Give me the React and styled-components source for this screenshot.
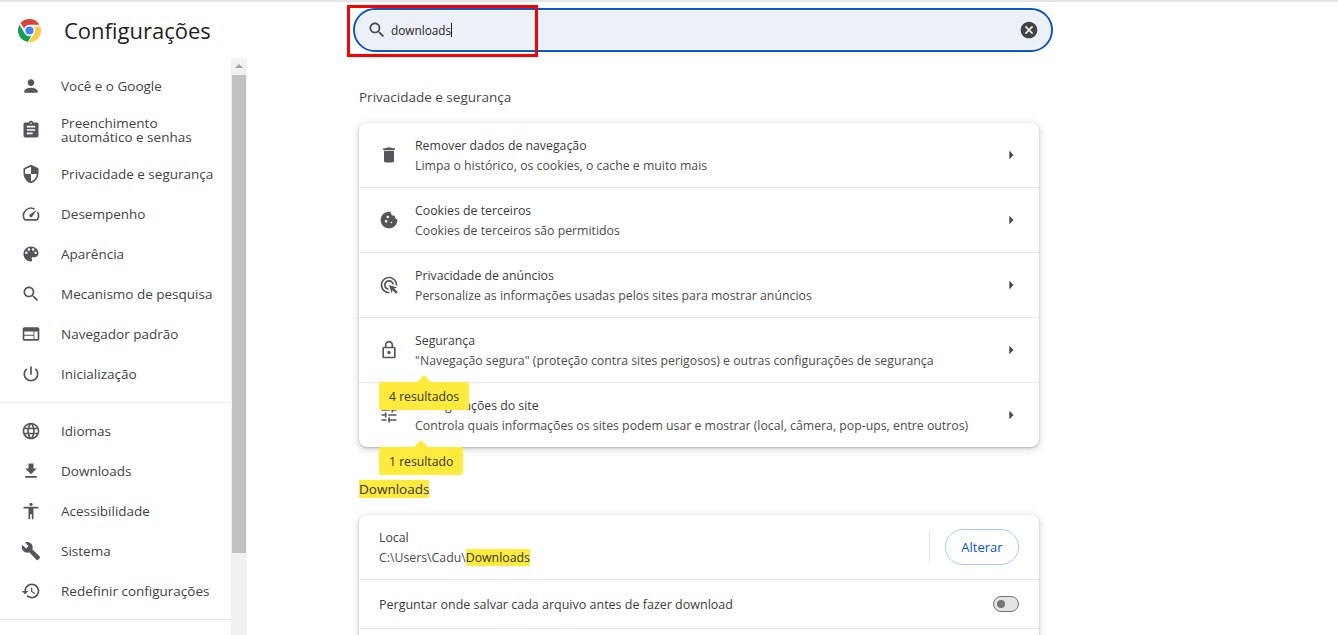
import React from 'react'
import styled, {createGlobalStyle} from 'styled-components'

const icons = {
  person: 'M12 12c2.21 0 4-1.79 4-4s-1.79-4-4-4-4 1.79-4 4 1.79 4 4 4zm0 2c-2.67 0-8 1.34-8 4v2h16v-2c0-2.66-5.33-4-8-4z',
  assignment: 'M19 3h-4.18C14.4 1.84 13.3 1 12 1c-1.3 0-2.4.84-2.82 2H5c-1.1 0-2 .9-2 2v14c0 1.1.9 2 2 2h14c1.1 0 2-.9 2-2V5c0-1.1-.9-2-2-2zm-7 0c.55 0 1 .45 1 1s-.45 1-1 1-1-.45-1-1 .45-1 1-1zm2 14H7v-2h7v2zm3-4H7v-2h10v2zm0-4H7V7h10v2z',
  shield: 'M12 1L3 5v6c0 5.55 3.84 10.74 9 12 5.16-1.26 9-6.45 9-12V5l-9-4zm0 10.99h7c-.53 4.12-3.28 7.79-7 8.94V12H5V6.3l7-3.11v8.8z',
  speed: 'M20.38 8.57l-1.23 1.85a8 8 0 0 1-.22 7.58H5.07A8 8 0 0 1 15.58 6.85l1.85-1.23A10 10 0 0 0 3.35 19a2 2 0 0 0 1.72 1h13.85a2 2 0 0 0 1.74-1 10 10 0 0 0-.27-10.44zm-9.79 6.84a2 2 0 0 0 2.83 0l5.66-8.49-8.49 5.66a2 2 0 0 0 0 2.83z',
  palette: 'M12 3c-4.97 0-9 4.03-9 9s4.03 9 9 9c.83 0 1.5-.67 1.5-1.5 0-.39-.15-.74-.39-1.01-.23-.26-.38-.61-.38-.99 0-.83.67-1.5 1.5-1.5H16c2.76 0 5-2.24 5-5 0-4.42-4.03-8-9-8zm-5.5 9c-.83 0-1.5-.67-1.5-1.5S5.67 9 6.5 9 8 9.67 8 10.5 7.33 12 6.5 12zm3-4C8.67 8 8 7.33 8 6.5S8.67 5 9.5 5s1.5.67 1.5 1.5S10.33 8 9.5 8zm5 0c-.83 0-1.5-.67-1.5-1.5S13.67 5 14.5 5s1.5.67 1.5 1.5S15.33 8 14.5 8zm3 4c-.83 0-1.5-.67-1.5-1.5S16.67 9 17.5 9s1.5.67 1.5 1.5-.67 1.5-1.5 1.5z',
  search: 'M15.5 14h-.79l-.28-.27C15.41 12.59 16 11.11 16 9.5 16 5.91 13.09 3 9.5 3S3 5.91 3 9.5 5.91 16 9.5 16c1.61 0 3.09-.59 4.23-1.57l.27.28v.79l5 4.99L20.49 19l-4.99-5zm-6 0C7.01 14 5 11.99 5 9.5S7.01 5 9.5 5 14 7.01 14 9.5 11.99 14 9.5 14z',
  web: 'M20 4H4c-1.1 0-1.99.9-1.99 2L2 18c0 1.1.9 2 2 2h16c1.1 0 2-.9 2-2V6c0-1.1-.9-2-2-2zm-5 14H4v-4h11v4zm0-5H4V9h11v4zm5 5h-4V9h4v9z',
  power: 'M13 3h-2v10h2V3zm4.83 2.17l-1.42 1.42C17.99 7.86 19 9.81 19 12c0 3.87-3.13 7-7 7s-7-3.13-7-7c0-2.19 1.01-4.14 2.58-5.42L6.17 5.17C4.23 6.82 3 9.26 3 12c0 4.97 4.03 9 9 9s9-4.03 9-9c0-2.74-1.23-5.18-3.17-6.83z',
  language: 'M11.99 2C6.47 2 2 6.48 2 12s4.47 10 9.99 10C17.52 22 22 17.52 22 12S17.52 2 11.99 2zm6.93 6h-2.95c-.32-1.25-.78-2.45-1.38-3.56 1.84.63 3.37 1.91 4.33 3.56zM12 4.04c.83 1.2 1.48 2.53 1.91 3.96h-3.82c.43-1.43 1.08-2.76 1.91-3.96zM4.26 14C4.1 13.36 4 12.69 4 12s.1-1.36.26-2h3.38c-.08.66-.14 1.32-.14 2 0 .68.06 1.34.14 2H4.26zm.82 2h2.95c.32 1.25.78 2.45 1.38 3.56-1.84-.63-3.37-1.9-4.33-3.56zm2.95-8H5.08c.96-1.66 2.49-2.93 4.33-3.56C8.81 5.55 8.35 6.75 8.03 8zM12 19.96c-.83-1.2-1.48-2.53-1.91-3.96h3.82c-.43 1.43-1.08 2.76-1.91 3.96zM14.34 14H9.66c-.09-.66-.16-1.32-.16-2 0-.68.07-1.35.16-2h4.68c.09.65.16 1.32.16 2 0 .68-.07 1.34-.16 2zm.25 5.56c.6-1.11 1.06-2.31 1.38-3.56h2.95c-.96 1.65-2.49 2.93-4.33 3.56zM16.36 14c.08-.66.14-1.32.14-2 0-.68-.06-1.34-.14-2h3.38c.16.64.26 1.31.26 2s-.1 1.36-.26 2h-3.38z',
  download: 'M19 9h-4V3H9v6H5l7 7 7-7zM5 18v2h14v-2H5z',
  accessibility: 'M12 2c1.1 0 2 .9 2 2s-.9 2-2 2-2-.9-2-2 .9-2 2-2zm9 7h-6v13h-2v-6h-2v6H9V9H3V7h18v2z',
  build: 'M22.7 19l-9.1-9.1c.9-2.3.4-5-1.5-6.9-2-2-5-2.4-7.4-1.3L9 6 6 9 1.6 4.7C.4 7.1.9 10.1 2.9 12.1c1.9 1.9 4.6 2.4 6.9 1.5l9.1 9.1c.4.4 1 .4 1.4 0l2.3-2.3c.5-.4.5-1.1.1-1.4z',
  restore: 'M13 3c-4.97 0-9 4.03-9 9H1l3.89 3.89.07.14L9 12H6c0-3.87 3.13-7 7-7s7 3.13 7 7-3.13 7-7 7c-1.93 0-3.68-.79-4.94-2.06l-1.42 1.42C8.27 19.99 10.51 21 13 21c4.97 0 9-4.03 9-9s-4.03-9-9-9zm-1 5v5l4.28 2.54.72-1.21-3.5-2.08V8H12z',
  trash: 'M6 19c0 1.1.9 2 2 2h8c1.1 0 2-.9 2-2V7H6v12zM19 4h-3.5l-1-1h-5l-1 1H5v2h14V4z',
  cookie: 'M21.95 10.99c-1.79-.03-3.7-1.95-2.68-4.22-2.97 1-5.78-1.59-5.19-4.56C7.11.74 2 6.41 2 12c0 5.52 4.48 10 10 10 5.89 0 10.54-5.08 9.95-11.01zM8.5 15c-.83 0-1.5-.67-1.5-1.5S7.67 12 8.5 12s1.5.67 1.5 1.5S9.33 15 8.5 15zm2-5C9.67 10 9 9.33 9 8.5S9.67 7 10.5 7s1.5.67 1.5 1.5-.67 1.5-1.5 1.5zm4.5 6c-.55 0-1-.45-1-1s.45-1 1-1 1 .45 1 1-.45 1-1 1z',
  ads: 'M11.71 17.99C8.53 17.84 6 15.22 6 12c0-3.31 2.69-6 6-6 3.22 0 5.84 2.53 5.99 5.71l-2.1-.63C15.48 9.31 13.89 8 12 8c-2.21 0-4 1.79-4 4 0 1.89 1.31 3.48 3.08 3.89l.63 2.1zM22 12c0 .3-.01.6-.04.9l-1.97-.59c.01-.1.01-.21.01-.31 0-4.42-3.58-8-8-8s-8 3.58-8 8 3.58 8 8 8c.1 0 .21 0 .31-.01l.59 1.97c-.3.03-.6.04-.9.04-5.52 0-10-4.48-10-10S6.48 2 12 2s10 4.48 10 10zm-3.77 4.26L22 15l-10-3 3 10 1.26-3.77 4.27 4.27 1.98-1.98-4.28-4.26z',
  lock: 'M18 8h-1V6c0-2.76-2.24-5-5-5S7 3.24 7 6v2H6c-1.1 0-2 .9-2 2v10c0 1.1.9 2 2 2h12c1.1 0 2-.9 2-2V10c0-1.1-.9-2-2-2zM9 6c0-1.66 1.34-3 3-3s3 1.34 3 3v2H9V6zm9 14H6V10h12v10zm-6-3c1.1 0 2-.9 2-2s-.9-2-2-2-2 .9-2 2 .9 2 2 2z',
  tune: 'M3 17v2h6v-2H3zM3 5v2h10V5H3zm10 16v-2h8v-2h-8v-2h-2v6h2zM7 9v2H3v2h4v2h2V9H7zm14 4v-2H11v2h10zm-6-4h2V7h4V5h-4V3h-2v6z',
  arrow: 'M10 17l5-5-5-5v10z',
  cancel: 'M12 2C6.47 2 2 6.47 2 12s4.47 10 10 10 10-4.47 10-10S17.53 2 12 2zm5 13.59L15.59 17 12 13.41 8.41 17 7 15.59 10.59 12 7 8.41 8.41 7 12 10.59 15.59 7 17 8.41 13.41 12 17 15.59z',
}

const Icon = ({name, size = 20}) => (
  <svg width={size} height={size} viewBox="0 0 24 24" fill="currentColor"><path d={icons[name]} /></svg>
)

const ChromeLogo = () => (
  <svg width="23" height="23" viewBox="0 0 48 48">
    <path fill="#db4437" d="M24 0a24 24 0 0 1 20.8 12H24a12 12 0 0 0-11.2 7.6L5.2 8.6A24 24 0 0 1 24 0z" />
    <path fill="#0f9d58" d="M3.2 12 L14 30.4A12 12 0 0 0 27.6 35.5L20.6 47.8A24 24 0 0 1 3.2 12z" />
    <path fill="#ffcd40" d="M44.8 12A24 24 0 0 1 22.6 48L33.6 30.8A12 12 0 0 0 33 16H44.8z" />
    <circle cx="24" cy="24" r="11" fill="#fff" />
    <circle cx="24" cy="24" r="8.6" fill="#4285f4" />
  </svg>
)

const navTop = [
  ['person', 'Você e o Google'],
  ['assignment', 'Preenchimento\nautomático e senhas'],
  ['shield', 'Privacidade e segurança'],
  ['speed', 'Desempenho'],
  ['palette', 'Aparência'],
  ['search', 'Mecanismo de pesquisa'],
  ['web', 'Navegador padrão'],
  ['power', 'Inicialização'],
]

const navBottom = [
  ['language', 'Idiomas'],
  ['download', 'Downloads'],
  ['accessibility', 'Acessibilidade'],
  ['build', 'Sistema'],
  ['restore', 'Redefinir configurações'],
]

const privacyRows = [
  ['trash', 'Remover dados de navegação', 'Limpa o histórico, os cookies, o cache e muito mais'],
  ['cookie', 'Cookies de terceiros', 'Cookies de terceiros são permitidos'],
  ['ads', 'Privacidade de anúncios', 'Personalize as informações usadas pelos sites para mostrar anúncios'],
  ['lock', 'Segurança', '"Navegação segura" (proteção contra sites perigosos) e outras configurações de segurança'],
  ['tune', 'Configurações do site', 'Controla quais informações os sites podem usar e mostrar (local, câmera, pop-ups, entre outros)'],
]

const App = () => (
  <>
    <GlobalStyle />
    <Page>
      <Sidebar>
        <Brand>
          <ChromeLogo />
          <BrandTitle>Configurações</BrandTitle>
        </Brand>
        <NavArea>
          <Nav>
            <NavGroup>
              {navTop.map(([icon, label]) => (
                <NavItem key={label} $tall={label.includes('\n')}>
                  <Icon name={icon} />
                  <NavLabel>{label}</NavLabel>
                </NavItem>
              ))}
            </NavGroup>
            <NavGroup>
              {navBottom.map(([icon, label]) => (
                <NavItem key={label}>
                  <Icon name={icon} />
                  <NavLabel>{label}</NavLabel>
                </NavItem>
              ))}
            </NavGroup>
          </Nav>
          <ScrollTrack>
            <ScrollArrow />
            <ScrollThumb />
            <ScrollArrow $down />
          </ScrollTrack>
        </NavArea>
      </Sidebar>
      <Main>
        <SearchBox>
          <Icon name="search" />
          <SearchText>downloads<Caret /></SearchText>
          <ClearButton><Icon name="cancel" /></ClearButton>
          <RedFrame />
        </SearchBox>
        <SectionTitle>Privacidade e segurança</SectionTitle>
        <Card>
          {privacyRows.map(([icon, title, text]) => (
            <LinkRow key={title}>
              <RowIcon><Icon name={icon} /></RowIcon>
              <RowText>
                <RowTitle>{title}</RowTitle>
                <RowSub>{text}</RowSub>
              </RowText>
              <RowArrow><Icon name="arrow" /></RowArrow>
            </LinkRow>
          ))}
          <Bubble $top={259}>4 resultados</Bubble>
          <Bubble $top={324}>1 resultado</Bubble>
        </Card>
        <DownloadsTitle><Mark>Downloads</Mark></DownloadsTitle>
        <Card>
          <SettingRow>
            <RowText>
              <RowTitle>Local</RowTitle>
              <RowSub>C:\Users\Cadu\<Mark>Downloads</Mark></RowSub>
            </RowText>
            <Divider />
            <OutlineButton>Alterar</OutlineButton>
          </SettingRow>
          <SettingRow $short>
            <SettingLabel>Perguntar onde salvar cada arquivo antes de fazer download</SettingLabel>
            <Toggle />
          </SettingRow>
          <SettingRow $short />
        </Card>
      </Main>
    </Page>
  </>
)

const GlobalStyle = createGlobalStyle`
  html, body {
    margin: 0;
    background: #fff;
    font-family: "Open Sans", "Noto Sans", sans-serif;
    overflow: hidden;
  }
`

const Page = styled.div`
  display: grid;
  grid-template-columns: 247px 1fr;
  height: 635px;
  overflow: hidden;
  border-top: 2px solid #e6e6e6;
  box-sizing: border-box;
`

const Sidebar = styled.aside`
  display: flex;
  flex-direction: column;
  min-height: 0;
`

const Brand = styled.div`
  display: flex;
  align-items: center;
  height: 56px;
  flex: none;
  padding-left: 18px;
  box-sizing: border-box;
  gap: 23px;
`

const BrandTitle = styled.h1`
  margin: 0;
  font-size: 22px;
  font-weight: 400;
  color: #1f1f1f;
`

const NavArea = styled.div`
  display: flex;
  flex: 1;
  min-height: 0;
`

const Nav = styled.nav`
  width: 231px;
  flex: none;
`

const NavGroup = styled.div`
  padding: 8px 0;
  border-bottom: 1px solid #e9e9e9;
`

const NavItem = styled.div`
  display: flex;
  align-items: center;
  gap: 20px;
  height: ${(p) => (p.$tall ? '48px' : '40px')};
  padding-left: 21px;
  color: #55565a;
  svg {
    flex: none;
  }
`

const NavLabel = styled.span`
  font-size: 13.5px;
  line-height: 14px;
  white-space: pre-line;
  color: #444;
`

const ScrollTrack = styled.div`
  width: 16px;
  display: flex;
  flex-direction: column;
  background: #f1f1f1;
`

const ScrollArrow = styled.div`
  height: 17px;
  flex: none;
  position: relative;
  &::after {
    content: '';
    position: absolute;
    left: 4px;
    top: 6px;
    border-left: 4px solid transparent;
    border-right: 4px solid transparent;
    ${(p) => (p.$down ? 'border-top: 4px solid #505050;' : 'border-bottom: 4px solid #a3a3a3;')}
  }
`

const ScrollThumb = styled.div`
  height: 478px;
  margin: 0 1px auto;
  background: #c1c1c1;
`

const Main = styled.main`
  padding: 6px 0 0 112px;
  display: flex;
  flex-direction: column;
  align-items: flex-start;
`

const SearchBox = styled.div`
  position: relative;
  display: flex;
  align-items: center;
  width: 700px;
  height: 44px;
  margin-left: -6px;
  padding: 0 13px 1px 12px;
  box-sizing: border-box;
  flex: none;
  background: #ecf0f8;
  border: 2px solid #0b57d0;
  border-radius: 22px;
  box-shadow: inset 0 0 0 1px #fff;
  color: #474747;
`

const SearchText = styled.div`
  flex: 1;
  margin-left: 4px;
  font-size: 11.8px;
  color: #1f1f1f;
  display: flex;
  align-items: center;
  padding-top: 1px;
`

const Caret = styled.span`
  display: inline-block;
  width: 1px;
  height: 14px;
  background: #1f1f1f;
`

const ClearButton = styled.span`
  display: flex;
  color: #444;
  margin-right: -1px;
  margin-top: 1px;
`

const RedFrame = styled.div`
  position: absolute;
  left: -8px;
  top: -5px;
  width: 191px;
  height: 52px;
  box-sizing: border-box;
  border: 3px solid #f00;
  pointer-events: none;
`

const SectionTitle = styled.h2`
  margin: 36px 0 16px;
  font-size: 13.5px;
  line-height: 19px;
  font-weight: 400;
  color: #474747;
`

const DownloadsTitle = styled(SectionTitle)`
  margin: 33px 0 16px;
  color: #1f1f1f;
`

const Mark = styled.span`
  background: #ffeb3b;
  color: #333;
`

const Card = styled.section`
  position: relative;
  width: 680px;
  flex: none;
  background: #fff;
  border-radius: 8px;
  box-shadow: 0 1px 2px rgba(60, 64, 67, 0.3), 0 2px 6px 2px rgba(60, 64, 67, 0.15);
`

const LinkRow = styled.div`
  display: flex;
  align-items: center;
  height: 65px;
  padding: 0 20px;
  box-sizing: border-box;
  border-top: 1px solid #e8e8e8;
  &:first-child {
    height: 64px;
    border-top: 0;
  }
`

const RowIcon = styled.div`
  display: flex;
  width: 20px;
  margin-right: 16px;
  color: #55565a;
`

const RowText = styled.div`
  flex: 1;
  min-width: 0;
  padding-top: 2px;
`

const RowTitle = styled.div`
  font-size: 12.3px;
  line-height: 20px;
  color: #3c3c3c;
`

const RowSub = styled.div`
  font-size: 12.3px;
  line-height: 20px;
  color: #4d4d4d;
`

const RowArrow = styled.div`
  display: flex;
  color: #474747;
  margin-right: -2px;
  margin-left: 8px;
  width: 20px;
  justify-content: center;
`

const Bubble = styled.div`
  position: absolute;
  left: 20px;
  top: ${(p) => p.$top}px;
  height: 28px;
  padding: 0 10px;
  display: flex;
  align-items: center;
  background: #ffeb3b;
  border-radius: 2px;
  font-size: 12.2px;
  color: #333;
  &::before {
    content: '';
    position: absolute;
    left: 50%;
    top: -7px;
    margin-left: -7px;
    border-left: 7px solid transparent;
    border-right: 7px solid transparent;
    border-bottom: 7px solid #ffeb3b;
  }
`

const SettingRow = styled.div`
  display: flex;
  align-items: center;
  height: ${(p) => (p.$short ? '49px' : '64px')};
  padding: 0 20px;
  box-sizing: border-box;
  border-top: 1px solid #e8e8e8;
  &:first-child {
    border-top: 0;
  }
`

const SettingLabel = styled.div`
  flex: 1;
  font-size: 12.5px;
  color: #3c3c3c;
`

const Divider = styled.div`
  width: 1px;
  height: 32px;
  background: #e8e8e8;
  margin-right: 15px;
`

const OutlineButton = styled.button`
  width: 74px;
  height: 36px;
  padding: 0;
  background: #fff;
  border: 1px solid #a8c7fa;
  border-radius: 18px;
  font: 500 13px "Open Sans", "Noto Sans", sans-serif;
  color: #0b57d0;
`

const Toggle = styled.div`
  position: relative;
  width: 26px;
  height: 16px;
  box-sizing: border-box;
  background: #e3e3e3;
  border: 1px solid #747775;
  border-radius: 8px;
  &::after {
    content: '';
    position: absolute;
    left: 3px;
    top: 3px;
    width: 8px;
    height: 8px;
    border-radius: 50%;
    background: #747775;
  }
`

export default App
